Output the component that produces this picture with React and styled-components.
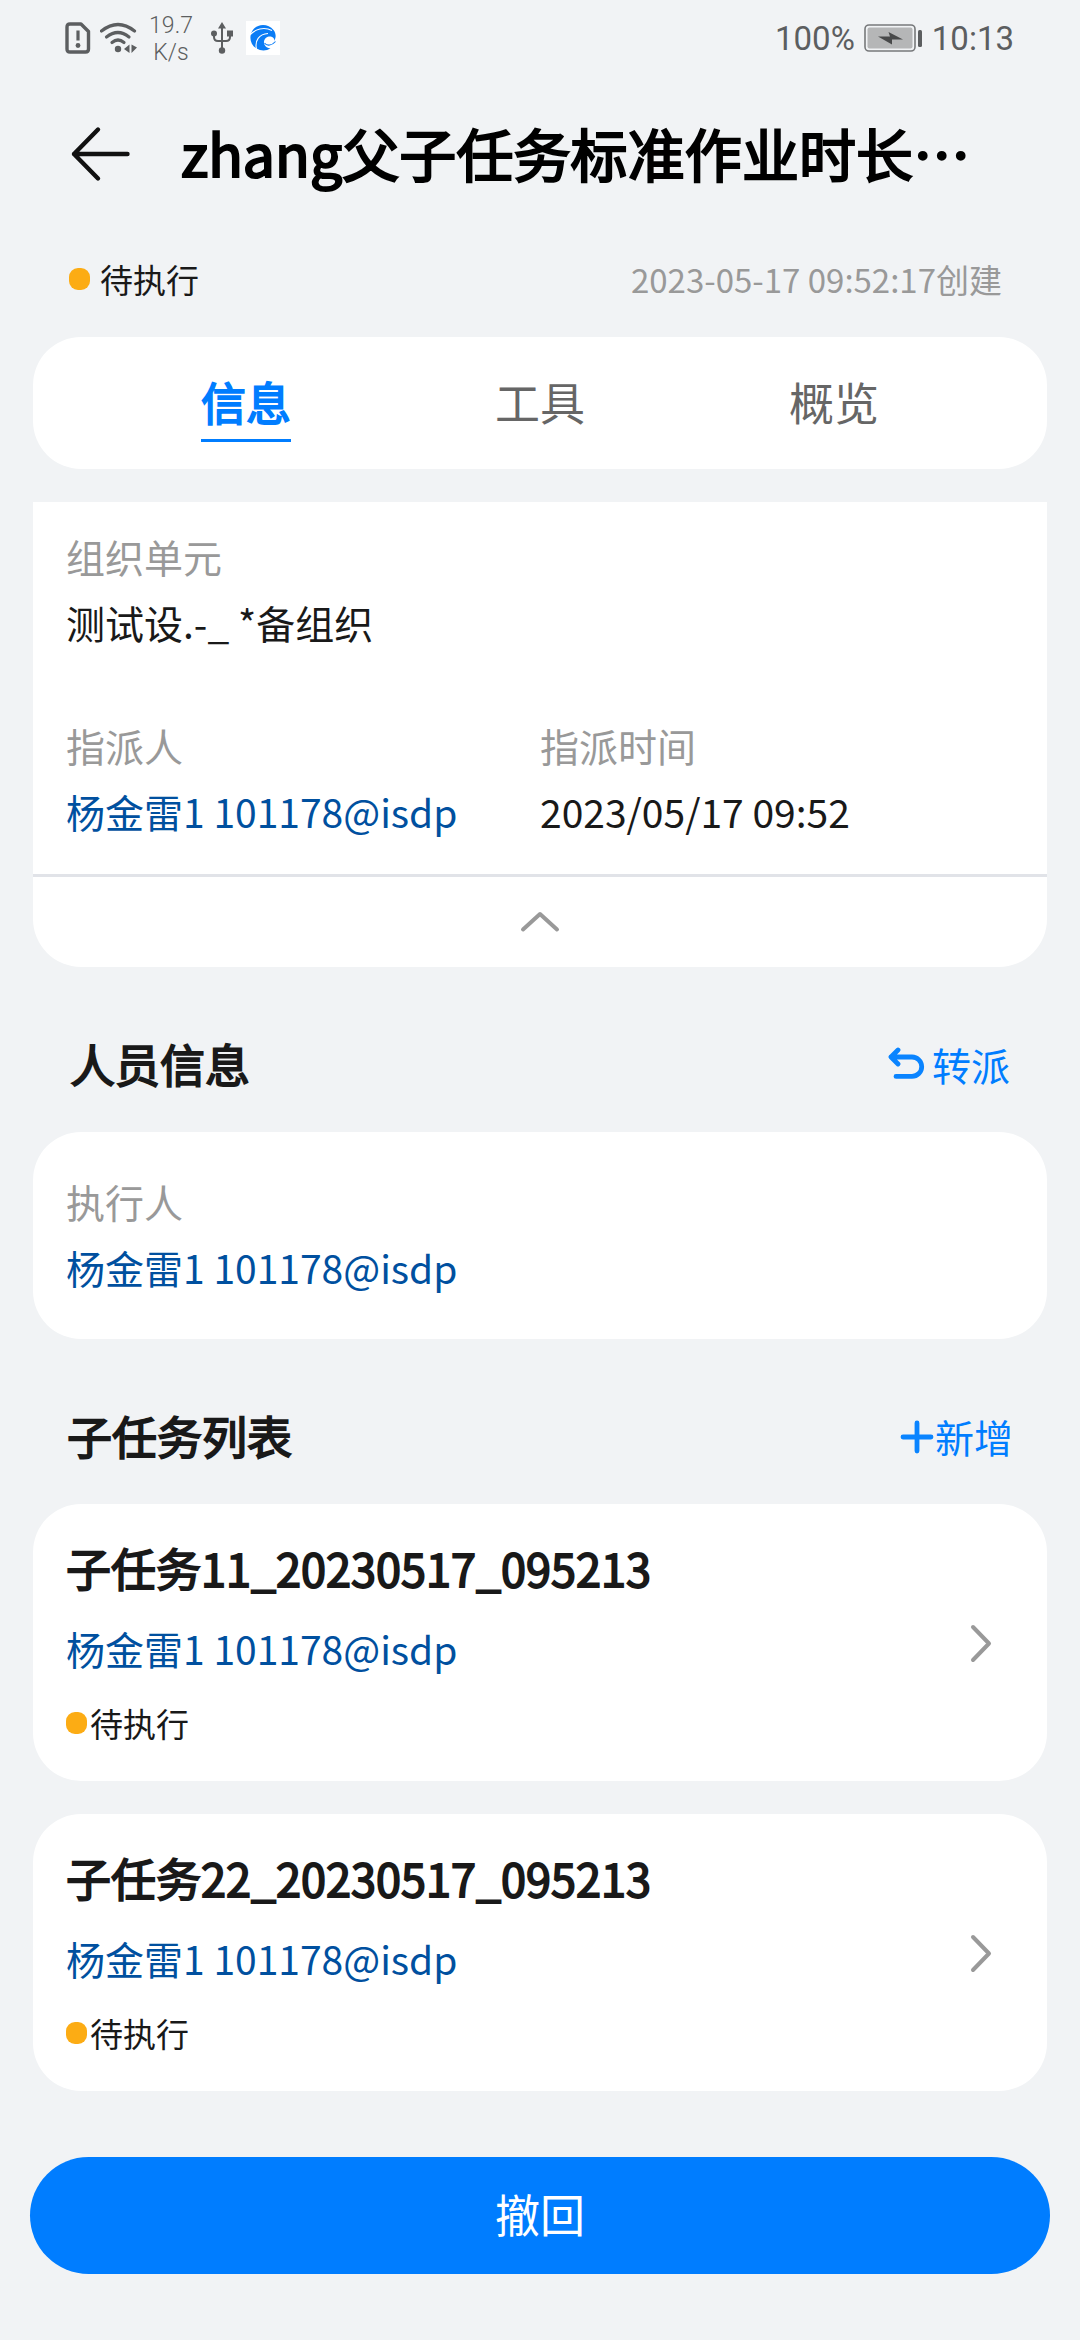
import React from "react";
import styled, { createGlobalStyle } from "styled-components";

const subTasks = [
  {
    name: "子任务11_20230517_095213",
    owner: "杨金雷1 101178@isdp",
    status: "待执行"
  },
  {
    name: "子任务22_20230517_095213",
    owner: "杨金雷1 101178@isdp",
    status: "待执行"
  }
];

export default function App() {
  return (
    <Page>
      <GlobalStyle />
      <StatusBar />
      <Header>
        <BackIcon />
        <h1>zhang父子任务标准作业时长⋯</h1>
      </Header>
      <Meta>
        <Status $gap={10}>
          <Dot />
          待执行
        </Status>
        <time>2023-05-17 09:52:17创建</time>
      </Meta>
      <Tabs>
        <Tab $active>信息</Tab>
        <Tab>工具</Tab>
        <Tab>概览</Tab>
      </Tabs>
      <InfoCard>
        <Fields>
          <Field $wide>
            <Label>组织单元</Label>
            <Value>测试设.-_ *备组织</Value>
          </Field>
          <Field>
            <Label>指派人</Label>
            <Value $link>杨金雷1 101178@isdp</Value>
          </Field>
          <Field>
            <Label>指派时间</Label>
            <Value>2023/05/17 09:52</Value>
          </Field>
        </Fields>
        <Collapse>
          <svg width="40" height="22" viewBox="0 0 40 22">
            <path d="M3 18.500 L20 3 L37 18.500" />
          </svg>
        </Collapse>
      </InfoCard>
      <SectionHead $side={70}>
        <h2>人员信息</h2>
        <Action $gap={6}>
          <svg width="38" height="34" viewBox="0 0 38 34">
            <path d="M10 3 L3 10 L10 17 M3 10 H24 A9.700 9.700 0 0 1 24 29.400 H8" />
          </svg>
          转派
        </Action>
      </SectionHead>
      <PersonCard>
        <Label>执行人</Label>
        <Value $link>杨金雷1 101178@isdp</Value>
      </PersonCard>
      <SectionHead $side={67}>
        <h2>子任务列表</h2>
        <Action $gap={1}>
          <svg width="34" height="36" viewBox="0 0 34 36">
            <path d="M17 5 V33 M3 19 H31" />
          </svg>
          新增
        </Action>
      </SectionHead>
      <TaskList>
        {subTasks.map(task => (
          <TaskCard key={task.name}>
            <div>
              <h3>{task.name}</h3>
              <Value $link>{task.owner}</Value>
              <Status>
                <Dot />
                {task.status}
              </Status>
            </div>
            <svg width="22" height="40" viewBox="0 0 22 40">
              <path d="M3 4 L19 20.500 L3 37" />
            </svg>
          </TaskCard>
        ))}
      </TaskList>
      <RevokeButton>撤回</RevokeButton>
    </Page>
  );
}

function StatusBar() {
  return (
    <Bar>
      <BarIcons>
        <svg width="26" height="32" viewBox="0 0 26 32">
          <path
            d="M5 2 H16 L23.500 9.500 V27 Q23.500 30 20.500 30 H5 Q2 30 2 27 V5 Q2 2 5 2 Z"
            fill="none"
            stroke="#5c5e60"
            strokeWidth="3.4"
            strokeLinejoin="round"
          />
          <path d="M13 8.500 V18.500" stroke="#5c5e60" strokeWidth="3.2" />
          <circle cx="13" cy="23.500" r="2.4" fill="#5c5e60" />
        </svg>
        <svg width="38" height="32" viewBox="0 0 38 32">
          <g fill="none" stroke="#5c5e60" strokeWidth="3.2" strokeLinecap="round">
            <path d="M1.500 9 Q18 -4 34.500 9" />
            <path d="M6.500 15 Q18 6 29 15" />
            <path d="M12 20.500 Q18 15.500 24 20.500" />
          </g>
          <circle cx="18" cy="27" r="3.200" fill="#5c5e60" />
          <path d="M29.500 22.500 V31 L24 27 Z M31.500 22.500 V31 L37 25.500 Z" fill="#5c5e60" />
        </svg>
        <Speed>
          <span>19.7</span>
          <span>K/s</span>
        </Speed>
        <svg width="22" height="32" viewBox="0 0 22 32">
          <path
            d="M11 4 V28 M3 12 V15 Q3 19 7 19 H15 Q19 19 19 15 V12"
            fill="none"
            stroke="#5c5e60"
            strokeWidth="2"
          />
          <path d="M11 0 L15 6.500 H7 Z M16 8.500 H22 V14.500 H16 Z" fill="#5c5e60" />
          <circle cx="3" cy="11.500" r="3" fill="#5c5e60" />
          <circle cx="11" cy="28.500" r="3.200" fill="#5c5e60" />
        </svg>
        <WaveLogo />
      </BarIcons>
      <Battery>
        100%
        <svg width="59" height="28" viewBox="0 0 59 28">
          <rect x="1" y="1" width="50" height="26" rx="4" fill="#f1f3f5" stroke="#77797b" strokeWidth="1.600" />
          <rect x="3.500" y="3.500" width="45" height="21" rx="2" fill="#b5b6b7" />
          <path d="M14 12.500 L26 12.500 L24.500 8 L39 15.500 L28 15.500 L28 20.500 Z" fill="#48494a" />
          <rect x="54" y="6" width="4" height="17" rx="1.500" fill="#5c5e60" />
        </svg>
        10:13
      </Battery>
    </Bar>
  );
}

function WaveLogo() {
  return (
    <svg width="34" height="34" viewBox="0 0 34 34">
      <rect width="34" height="34" fill="#fff" />
      <path
        d="M27.500 9 C22 2 11 2.500 6.500 9.500 C2.500 16 4.500 24 10.500 27.500 C15 30 20 30 24.500 27.500 C20.500 27 17.500 24 18 20.500 C18.500 16.500 23 14.500 26 16 C28 17 28.500 18.500 28 20 C30.500 17 30 12 27.500 9 Z"
        fill="#0a7cf5"
      />
      <path
        d="M4 14 C9 8 18 5.500 26 9.500 M10.500 28 C8.500 20 13 13 22 12.500"
        fill="none"
        stroke="#fff"
        strokeWidth="1.100"
      />
      <path
        d="M18.500 22 C21 25.500 26 24.500 29.500 20.500"
        fill="none"
        stroke="#0a7cf5"
        strokeWidth="1.100"
      />
    </svg>
  );
}

function BackIcon() {
  return (
    <svg width="60" height="56" viewBox="0 0 60 56">
      <path
        d="M28 3.500 L4 28 L28 52.500 M4 28 H57.500"
        fill="none"
        stroke="#111"
        strokeWidth="4.400"
        strokeLinecap="round"
        strokeLinejoin="round"
      />
    </svg>
  );
}

const GlobalStyle = createGlobalStyle`
  * {
    box-sizing: border-box;
  }

  body {
    margin: 0;
    background: #f1f3f5;
  }

  h1, h2, h3, p {
    margin: 0;
    font-weight: 400;
  }

  /* emboldened regular weight, keeps the regular advance widths */
  h2, h3 {
    -webkit-text-stroke: 1.8px currentColor;
  }

  svg {
    display: block;
    flex-shrink: 0;
  }
`;

const Page = styled.div`
  display: flex;
  flex-direction: column;
  width: 1080px;
  height: 2340px;
  background: #f1f3f5;
  color: #191919;
  font-family: "Noto Sans CJK SC", sans-serif;
  overflow: hidden;
`;

const Bar = styled.div`
  display: flex;
  justify-content: space-between;
  align-items: center;
  height: 76px;
  padding: 0 66px 0 65px;
  color: #5c5e60;
  font-family: Roboto, sans-serif;
`;

const BarIcons = styled.div`
  display: flex;
  align-items: center;

  svg + svg {
    margin-left: 9px;
  }

  svg:last-child {
    margin-left: 13px;
  }
`;

const Speed = styled.div`
  display: flex;
  flex-direction: column;
  align-items: center;
  width: 44px;
  margin: 2px 18px 0 11px;
  font-size: 23px;
  font-weight: 300;
  line-height: 27px;
`;

const Battery = styled.div`
  display: flex;
  align-items: center;
  gap: 9px;
  font-size: 33px;
`;

const Header = styled.header`
  display: flex;
  align-items: center;
  height: 156px;
  padding-left: 70px;

  h1 {
    margin: -5px 0 0 51px;
    color: #000;
    font-size: 57px;
    letter-spacing: 0.1px;
    line-height: 84px;
    white-space: nowrap;
    -webkit-text-stroke: 2.2px #000;
  }
`;

const Meta = styled.div`
  display: flex;
  justify-content: space-between;
  align-items: center;
  height: 105px;
  padding: 0 78px 11px 69px;
  font-size: 33px;

  time {
    color: #999;
  }
`;

const Status = styled.div`
  display: flex;
  align-items: center;
  gap: ${props => props.$gap || 3}px;
  font-size: 33px;
  line-height: 48px;
`;

const Dot = styled.i`
  width: 21px;
  height: 22px;
  border-radius: 9px;
  background: #fcac14;
`;

const Tabs = styled.nav`
  display: flex;
  justify-content: space-around;
  height: 132px;
  margin: 0 33px;
  padding: 33px 66px 0;
  border-radius: 48px;
  background: #fff;
`;

const Tab = styled.div`
  height: 72px;
  border-bottom: 3px solid ${props => (props.$active ? "#007dff" : "transparent")};
  color: ${props => (props.$active ? "#007dff" : "#666")};
  font-size: 45px;
  line-height: 63px;
  -webkit-text-stroke: ${props => (props.$active ? "1.8px" : "0")} currentColor;
`;

const InfoCard = styled.section`
  margin: 33px 33px 0;
  border-radius: 0 0 48px 48px;
  background: #fff;
`;

const Fields = styled.div`
  display: grid;
  grid-template-columns: 474px 1fr;
  align-content: start;
  row-gap: 57px;
  height: 372px;
  padding: 21px 33px 0;
`;

const Field = styled.div`
  grid-column: ${props => (props.$wide ? "1 / -1" : "auto")};
`;

const Label = styled.p`
  color: #999;
  font-size: 39px;
  line-height: 66px;
`;

const Value = styled.p`
  color: ${props => (props.$link ? "#00509f" : "#191919")};
  font-size: 39px;
  line-height: 66px;
`;

const Collapse = styled.div`
  display: flex;
  justify-content: center;
  align-items: center;
  height: 93px;
  border-top: 3px solid #e1e3e8;

  path {
    fill: none;
    stroke: #999;
    stroke-width: 4;
    stroke-linecap: round;
    stroke-linejoin: round;
  }
`;

const SectionHead = styled.div`
  display: flex;
  justify-content: space-between;
  align-items: center;
  height: 165px;
  padding: 29px ${props => props.$side}px 0;

  h2 {
    font-size: 45px;
    line-height: 66px;
  }
`;

const Action = styled.div`
  display: flex;
  align-items: center;
  gap: ${props => props.$gap}px;
  color: #007dff;
  font-size: 39px;

  path {
    fill: none;
    stroke: #0a84ff;
    stroke-width: 4.8;
    stroke-linecap: round;
    stroke-linejoin: round;
  }
`;

const PersonCard = styled.section`
  height: 207px;
  margin: 0 33px;
  padding: 36px 33px 0;
  border-radius: 48px;
  background: #fff;
`;

const TaskList = styled.div`
  display: flex;
  flex-direction: column;
  gap: 33px;
  padding: 0 33px;
`;

const TaskCard = styled.article`
  display: flex;
  justify-content: space-between;
  align-items: center;
  height: 277px;
  padding: 0 55px 0 33px;
  border-radius: 48px;
  background: #fff;

  > div {
    padding-bottom: 4px;
  }

  h3 {
    font-size: 45px;
    line-height: 66px;
  }

  p {
    margin: 14px 0 18px;
  }

  path {
    fill: none;
    stroke: #999;
    stroke-width: 4;
    stroke-linecap: round;
    stroke-linejoin: round;
  }
`;

const RevokeButton = styled.button`
  height: 117px;
  margin: 66px 30px 0;
  padding: 0 0 5px;
  border: none;
  border-radius: 59px;
  background: #007dff;
  color: #fff;
  font-family: inherit;
  font-size: 45px;
`;
